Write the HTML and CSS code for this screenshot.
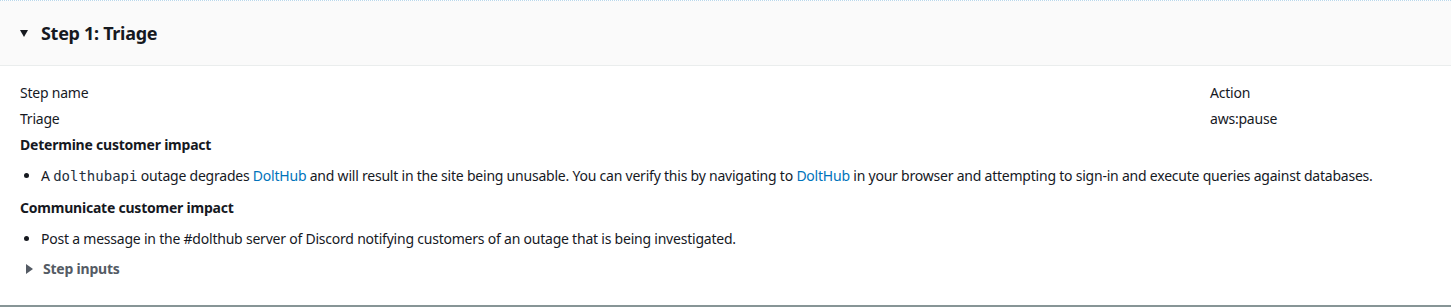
FILE: index.html
```html
<!DOCTYPE html>
<html lang="en">
<head>
  <meta charset="UTF-8">
  <title>Step 1: Triage</title>
  <link rel="stylesheet" href="styles.css">
</head>
<body>

<div class="paso">
  <div class="paso-cabecera">
    <span class="flecha abajo"></span>
    <h2>Step 1: Triage</h2>
  </div>

  <div class="paso-cuerpo">
    <div class="datos">
      <div>
        <div class="fila">Step name</div>
        <div class="fila">Triage</div>
      </div>
      <div>
        <div class="fila">Action</div>
        <div class="fila">aws:pause</div>
      </div>
    </div>

    <h4>Determine customer impact</h4>
    <ul>
      <li>A <code>dolthubapi</code> outage degrades <a href="#">DoltHub</a> and will result in the site being unusable. You can verify this by navigating to <a href="#">DoltHub</a> in your browser and attempting to sign-in and execute queries against databases.</li>
    </ul>

    <h4>Communicate customer impact</h4>
    <ul>
      <li>Post a message in the #dolthub server of Discord notifying customers of an outage that is being investigated.</li>
    </ul>

    <div class="entradas">
      <span class="flecha derecha"></span>
      <span>Step inputs</span>
    </div>
  </div>
</div>

</body>
</html>
```

FILE: styles.css
```css
body {
  margin: 0;
  font-family: 'Noto Sans', sans-serif;
  font-size: 14px;
  letter-spacing: -0.22px;
  color: #16191f;
  background-color: white;
}

.paso {
  border-top: 1px dotted #b9d7ea;
  border-bottom: 2px solid #879596;
}

.paso-cabecera {
  display: flex;
  align-items: center;
  gap: 13px;
  height: 64px;
  padding: 0 20px;
  background-color: #fafafa;
  border-bottom: 1px solid #eaeded;
}

.paso-cabecera h2 {
  margin: 0;
  font-size: 18px;
  font-weight: 700;
  line-height: 22px;
  letter-spacing: -0.3px;
}

.flecha {
  display: inline-block;
  width: 0;
  height: 0;
}

.flecha.abajo {
  border-left: 4.5px solid transparent;
  border-right: 4.5px solid transparent;
  border-top: 7px solid #16191f;
}

.flecha.derecha {
  border-top: 5px solid transparent;
  border-bottom: 5px solid transparent;
  border-left: 7px solid #545b64;
}

.paso-cuerpo {
  padding: 14px 20px 25px;
}

.datos {
  display: grid;
  grid-template-columns: 1fr 221px;
}

.fila {
  line-height: 26px;
}

h4 {
  margin: 0;
  font-size: 14px;
  font-weight: 700;
  line-height: 26px;
}

ul {
  margin: 7px 0 8px;
  padding-left: 21px;
  line-height: 22px;
}

a {
  color: #0073bb;
  text-decoration: none;
}

code {
  font-family: 'DejaVu Sans Mono', monospace;
  font-size: 14px;
  letter-spacing: 0;
  color: #232f3e;
}

.entradas {
  display: flex;
  align-items: center;
  gap: 10px;
  margin-top: 6px;
  padding-left: 6px;
  line-height: 22px;
  font-weight: 700;
  color: #545b64;
}
```
